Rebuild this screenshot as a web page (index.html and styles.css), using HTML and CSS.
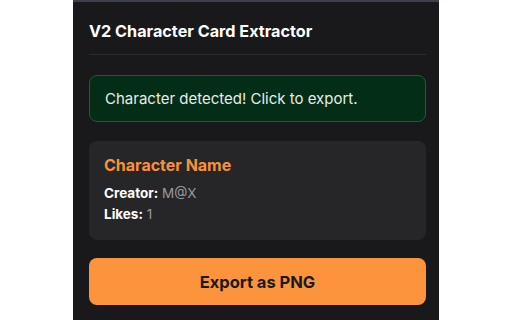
FILE: index.html
```html
<!DOCTYPE html>
<html lang="en">
<head>
<meta charset="UTF-8">
<meta name="viewport" content="width=device-width, initial-scale=1.0">
<title>V2 Character Card Extractor</title>
<link rel="stylesheet" href="styles.css">
</head>
<body>

<div class="popup">
  <h1 class="title">V2 Character Card Extractor</h1>

  <!-- Status message -->
  <div class="status">Character detected! Click to export.</div>

  <!-- Character info -->
  <div class="char-card">
    <h2 class="char-name">Character Name</h2>
    <p class="meta"><b>Creator:</b> <span>M@X</span></p>
    <p class="meta"><b>Likes:</b> <span>1</span></p>
  </div>

  <button type="button" class="export-btn">Export as PNG</button>
</div>

</body>
</html>
```

FILE: styles.css
```css
html, body {
  margin: 0;
  height: 100%;
  background: #fff;
}
body {
  font-family: Inter, "Noto Sans", sans-serif;
}
.popup {
  box-sizing: border-box;
  width: 366px;
  min-height: 100%;
  margin: 0 auto;
  padding: 19px 13px 0 16px;
  background: #19191b;
  border-top: 2px solid #3b404a;
  color: #fff;
}
.title {
  margin: 0 0 20px;
  padding: 0 0 13px;
  font-size: 16.2px;
  line-height: 20px;
  font-weight: 700;
  border-bottom: 1px solid #2c2c2f;
}
.status {
  box-sizing: border-box;
  height: 47px;
  padding: 0 15px;
  display: flex;
  align-items: center;
  background: #032d16;
  border: 1px solid #1f5c31;
  border-radius: 8px;
  font-size: 15px;
  color: #e8ece9;
  margin-bottom: 19px;
}
.char-card {
  box-sizing: border-box;
  height: 99px;
  padding: 14px 15px;
  background: #262628;
  border-radius: 8px;
  margin-bottom: 18px;
}
.char-name {
  margin: 0 0 8px;
  font-size: 16px;
  line-height: 20px;
  font-weight: 700;
  color: #f7923a;
}
.meta {
  margin: 0;
  font-size: 13.5px;
  line-height: 21px;
}
.meta b {
  color: #fff;
}
.meta span {
  color: #9a9a9e;
}
.export-btn {
  display: block;
  width: 100%;
  height: 47px;
  border: none;
  border-radius: 8px;
  background: #fb943d;
  color: #1a1a1a;
  font-family: Inter, "Noto Sans", sans-serif;
  font-size: 16.5px;
  font-weight: 700;
  cursor: pointer;
}
```
